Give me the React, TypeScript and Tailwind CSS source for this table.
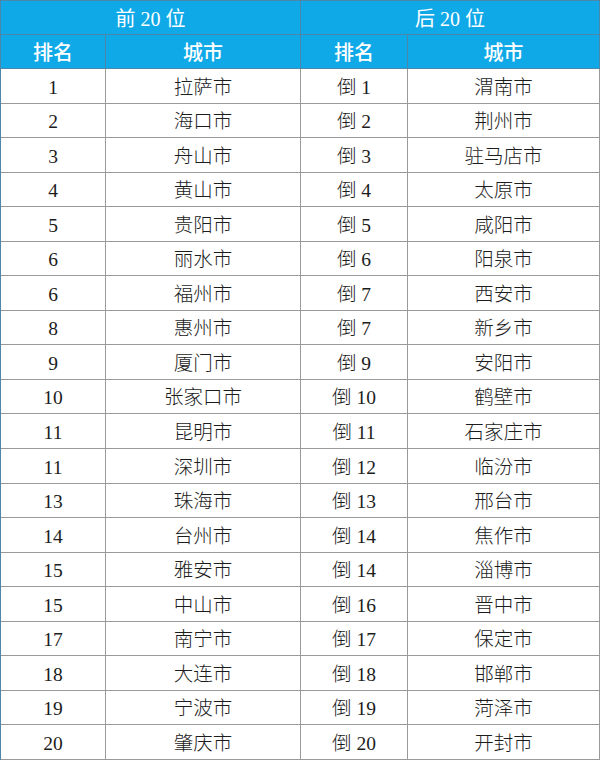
const top = [
  ['1', '拉萨市'], ['2', '海口市'], ['3', '舟山市'], ['4', '黄山市'], ['5', '贵阳市'],
  ['6', '丽水市'], ['6', '福州市'], ['8', '惠州市'], ['9', '厦门市'], ['10', '张家口市'],
  ['11', '昆明市'], ['11', '深圳市'], ['13', '珠海市'], ['14', '台州市'], ['15', '雅安市'],
  ['15', '中山市'], ['17', '南宁市'], ['18', '大连市'], ['19', '宁波市'], ['20', '肇庆市'],
];

const bottom = [
  ['1', '渭南市'], ['2', '荆州市'], ['3', '驻马店市'], ['4', '太原市'], ['5', '咸阳市'],
  ['6', '阳泉市'], ['7', '西安市'], ['7', '新乡市'], ['9', '安阳市'], ['10', '鹤壁市'],
  ['11', '石家庄市'], ['12', '临汾市'], ['13', '邢台市'], ['14', '焦作市'], ['14', '淄博市'],
  ['16', '晋中市'], ['17', '保定市'], ['18', '邯郸市'], ['19', '菏泽市'], ['20', '开封市'],
];

const head = 'flex items-center justify-center pt-[2px] bg-[#0fa9e8] text-white text-[20px] border-r border-b border-[#4d86a8]';
const cell = 'flex items-center justify-center pt-[3px] text-[#1c1c1c] text-[19.5px] font-light border-r border-b border-[#9a9a9a]';

export default function App() {
  return (
    <div
      className="w-[600px] h-[760px] bg-white grid grid-cols-[105px_195px_107px_1fr] grid-rows-[34px_34px_repeat(20,1fr)] border-l border-t border-[#4d86a8] leading-none"
      style={{ fontFamily: '"Liberation Serif", "Noto Sans CJK SC", serif' }}
    >
      <div className={`${head} col-span-2`}>前 20 位</div>
      <div className={`${head} col-span-2`}>后 20 位</div>
      <div className={`${head} font-medium`}>排名</div>
      <div className={`${head} font-medium`}>城市</div>
      <div className={`${head} font-medium`}>排名</div>
      <div className={`${head} font-medium`}>城市</div>
      {top.map((row, i) => (
        <Row key={i} left={row} right={bottom[i]} />
      ))}
    </div>
  );
}

function Row({ left, right }: { left: string[]; right: string[] }) {
  return (
    <>
      <div className={cell}>{left[0]}</div>
      <div className={cell}>{left[1]}</div>
      <div className={cell}>倒 {right[0]}</div>
      <div className={cell}>{right[1]}</div>
    </>
  );
}
